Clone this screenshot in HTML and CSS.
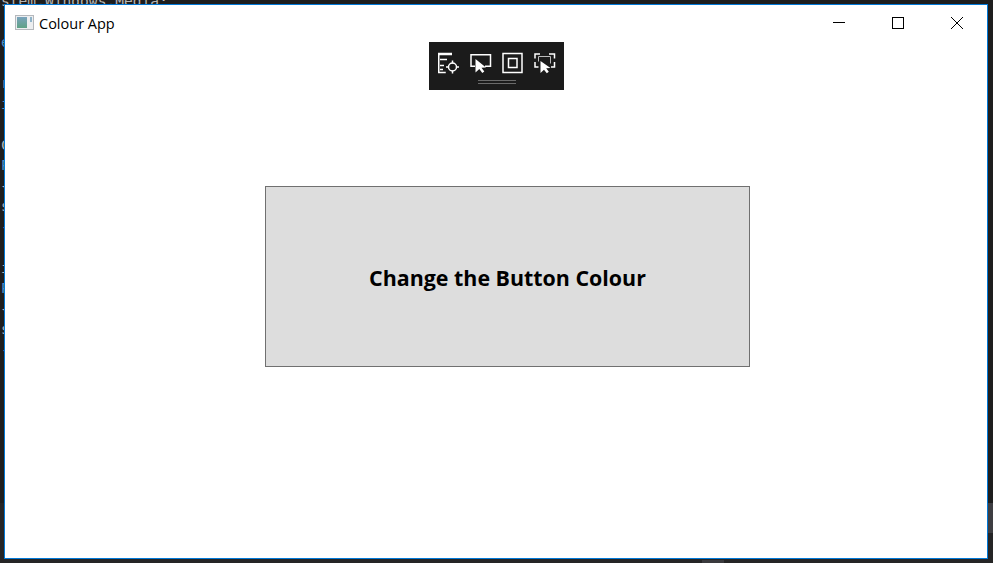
FILE: index.html
```html
<!DOCTYPE html>
<html lang="en">
<head>
  <meta charset="UTF-8" />
  <title>Colour App</title>
  <link rel="stylesheet" href="styles.css">
</head>
<body>

  <!-- code editor showing behind the app window -->
  <div class="editor">
    <div class="code-line">stem.Windows.Media;</div>
    <div class="code-line"></div>
    <div class="code-line blue">e</div>
    <div class="code-line"></div>
    <div class="code-line">r</div>
    <div class="code-line blue">i</div>
    <div class="code-line"></div>
    <div class="code-line">C</div>
    <div class="code-line blue">P</div>
    <div class="code-line">{</div>
    <div class="code-line">s</div>
    <div class="code-line blue">-</div>
    <div class="code-line"></div>
    <div class="code-line">i</div>
    <div class="code-line blue">P</div>
    <div class="code-line">{</div>
    <div class="code-line">s</div>
    <div class="code-line blue">-</div>
  </div>
  <div class="lower-panel">
    <div class="scrollbar-thumb"></div>
    <div class="panel-tab"></div>
  </div>

  <div class="window">
    <div class="titlebar">
      <svg class="app-icon" width="20" height="16" viewBox="0 0 20 16">
        <defs>
          <linearGradient id="icon-fill" x1="0" y1="0" x2="0" y2="1">
            <stop offset="0" stop-color="#7aa3bd" />
            <stop offset="1" stop-color="#5fa285" />
          </linearGradient>
        </defs>
        <rect x="0.5" y="0.5" width="18" height="14" fill="#eceef0" stroke="#b5b8bc" />
        <rect x="2" y="2" width="10" height="11" fill="url(#icon-fill)" />
        <rect x="15" y="2" width="2" height="5" fill="#8fb3c9" />
      </svg>
      <span class="app-title">Colour App</span>
      <div class="window-controls">
        <button class="control">
          <svg width="12" height="12" viewBox="0 0 12 12"><path d="M0 5.500h12" stroke="#000" fill="none" /></svg>
        </button>
        <button class="control">
          <svg width="12" height="12" viewBox="0 0 12 12"><rect x="0.5" y="0.5" width="11" height="11" stroke="#000" fill="none" /></svg>
        </button>
        <button class="control">
          <svg width="12" height="12" viewBox="0 0 12 12"><path d="M0 0l12 12M12 0L0 12" stroke="#000" fill="none" /></svg>
        </button>
      </div>
    </div>

    <div class="debug-toolbar">
      <div class="debug-icons">
        <svg width="22" height="22" viewBox="0 0 22 22" fill="none" stroke="#fff">
          <path d="M0 2h14" stroke-width="2.500" />
          <path d="M0.750 3v17.500h7" stroke-width="1.500" />
          <path d="M2 7.500h7M2 13.500h4M2 17.500h3" stroke-width="1.500" />
          <circle cx="14.500" cy="15" r="4" stroke-width="1.500" />
          <path d="M14.500 8.500v3M14.500 18.500v3M8 15h3M18 15h3" stroke-width="1.500" />
        </svg>
        <svg width="22" height="22" viewBox="0 0 22 22" fill="none" stroke="#fff">
          <path d="M5 14.250H1V2.750h19.500v11.500H15" stroke-width="1.500" />
          <path d="M5.500 7v13.500l3.800-3.500 3 4 2-1.500-2.800-3.800 4.500-.2z" fill="#fff" stroke="none" />
        </svg>
        <svg width="22" height="22" viewBox="0 0 22 22" fill="none" stroke="#fff">
          <rect x="1" y="1.500" width="19" height="19" stroke-width="1.500" />
          <rect x="6.500" y="6.500" width="8.500" height="9" stroke-width="1.500" />
        </svg>
        <svg width="22" height="22" viewBox="0 0 22 22" fill="none" stroke="#fff">
          <path d="M1 6.500V2h5M15 2h5.500v4.500M1 10v5h3.500M20.500 10v5H17" stroke-width="1.500" />
          <path d="M4.500 4.500h12v7M4.500 4.500v5" stroke="#bbb" />
          <path d="M6.500 9v12l3.500-3.300 2.800 3.600 2-1.500-2.600-3.500 4.300-.3z" fill="#fff" stroke="none" />
        </svg>
      </div>
      <div class="grip"></div>
    </div>

    <div class="content">
      <button class="big-button">Change the Button Colour</button>
    </div>
  </div>

</body>
</html>
```

FILE: styles.css
```css
html, body {
  height: 100%;
}

body {
  margin: 0;
  overflow: hidden;
  background: #1e1e1e;
  box-sizing: border-box;
  padding: 4px 5px 4px 4px;
  display: flex;
}

/* sits behind the window, only the left edge peeks out */
.editor {
  position: absolute;
  left: 1px;
  top: -9px;
  font-family: "DejaVu Sans Mono", monospace;
  font-size: 14.600px;
  color: #b4b4b4;
}

.code-line {
  height: 20.500px;
  line-height: 20.500px;
  white-space: pre;
}

.code-line.blue {
  color: #4a8fc7;
}

.lower-panel {
  position: absolute;
  left: 0;
  right: 0;
  top: 503px;
  bottom: 0;
  background: #252526;
}

.scrollbar-thumb {
  position: absolute;
  right: 0;
  top: 0;
  width: 6px;
  height: 30px;
  background: #3e3e42;
}

.panel-tab {
  position: absolute;
  left: 702px;
  bottom: 0;
  width: 22px;
  height: 3px;
  background: #3a3a3d;
}

.window {
  position: relative;
  flex: 1;
  display: flex;
  flex-direction: column;
  background: #fff;
  border: 1px solid #0078d7;
}

.titlebar {
  height: 30px;
  padding-top: 4px;
  display: flex;
  align-items: center;
  padding-left: 10px;
  margin-top: -1px;
}

.app-icon {
  margin-right: 4px;
}

.app-title {
  font-family: "Open Sans", "Noto Sans", sans-serif;
  font-size: 14.500px;
  color: #000;
}

.window-controls {
  margin-left: auto;
  margin-right: 1px;
  display: flex;
}

.control {
  width: 59px;
  height: 30px;
  border: none;
  background: none;
  padding: 0;
  display: flex;
  align-items: center;
  justify-content: center;
}

.debug-toolbar {
  position: absolute;
  top: 37px;
  left: 424px;
  width: 135px;
  height: 48px;
  background: #1b1b1b;
  display: flex;
  flex-direction: column;
  align-items: center;
}

.debug-icons {
  display: flex;
  gap: 10px;
  margin-top: 10px;
}

.grip {
  margin-top: 6px;
  width: 38px;
  height: 4px;
  border-top: 1px solid #6a6a6a;
  border-bottom: 1px solid #6a6a6a;
  box-sizing: border-box;
}

.content {
  flex: 1;
  display: flex;
  justify-content: center;
  padding-top: 148px;
  padding-left: 23px;
}

.big-button {
  width: 485px;
  height: 181px;
  padding-top: 3px;
  background: #dddddd;
  border: 1px solid #707070;
  font-family: "Open Sans", "Noto Sans", sans-serif;
  font-size: 21.400px;
  font-weight: 700;
  color: #000;
}
```
